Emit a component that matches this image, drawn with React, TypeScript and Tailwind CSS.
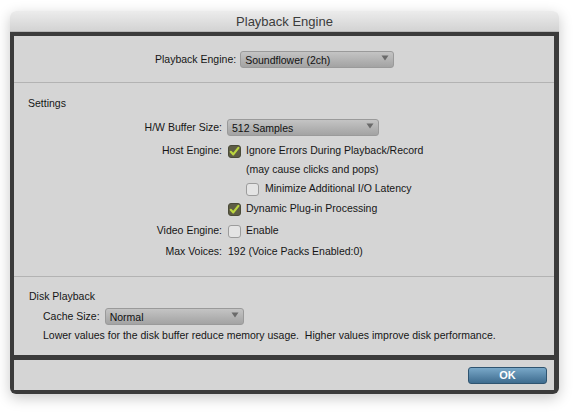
import React from "react";

const font = { fontFamily: '"Liberation Sans", Arial, sans-serif' };

function Dropdown({ value, w }: { value: string; w: string }) {
  return (
    <div
      className={`relative h-[17px] ${w} rounded-[3px] border border-[#9a9a9a] bg-gradient-to-b from-[#c4c4c4] to-[#a3a3a3] flex items-center pl-[4px] text-[10.5px] text-[#111]`}
    >
      <span className="leading-none mt-[1px]">{value}</span>
      <svg
        className="absolute right-[4px] top-[3px]"
        width="8"
        height="6"
        viewBox="0 0 8 6"
      >
        <path d="M0.5 0.5 H7.5 L4 5.5 Z" fill="#6a6a6a" />
      </svg>
    </div>
  );
}

function Check({ checked }: { checked: boolean }) {
  if (checked) {
    return (
      <div className="w-[13px] h-[13px] rounded-[3px] bg-[#5e5d45] border border-[#4a4a38] flex items-center justify-center shrink-0">
        <svg width="11" height="11" viewBox="0 0 11 11">
          <path
            d="M1.8 5.8 L4.3 8.4 L9.4 1.8"
            stroke="#bcd63f"
            strokeWidth="2.2"
            fill="none"
            strokeLinecap="round"
            strokeLinejoin="round"
          />
        </svg>
      </div>
    );
  }
  return (
    <div className="w-[13px] h-[13px] rounded-[3px] bg-[#e4e4e4] border border-[#9c9c9c] shrink-0" />
  );
}

function Row({
  label,
  mt,
  children,
}: {
  label?: string;
  mt: string;
  children: React.ReactNode;
}) {
  return (
    <div className={`flex items-center h-[16px] ${mt}`}>
      <div className="w-[208px] text-right shrink-0">{label}</div>
      <div className="ml-[6px] flex items-center">{children}</div>
    </div>
  );
}

export default function App() {
  return (
    <div
      className="w-[579px] h-[418px] bg-white pt-[11px] pl-[10px]"
      style={font}
    >
      <div className="w-[549px] rounded-[6px] shadow-[0_4px_14px_rgba(0,0,0,0.22)]">
        {/* title bar */}
        <div className="h-[21px] pt-[1px] rounded-t-[6px] bg-gradient-to-b from-[#ececec] to-[#d3d3d3] border-b border-[#b8b8b8] flex items-center justify-center text-[13px] text-[#3c3c3c]">
          Playback Engine
        </div>
        {/* dark frame */}
        <div className="bg-[#3b3b3b] pt-[4px] pl-[4px] pr-[5px] pb-[4px] rounded-b-[6px] flex flex-col gap-[5px]">
          {/* main panel */}
          <div className="bg-[#d5d5d5] h-[319px] flex flex-col text-[10.5px] text-[#161616]">
            {/* top section */}
            <div className="h-[47px] border-b border-[#b3b3b3] flex items-center pl-[141px] pt-[1px]">
              <span className="mr-[4px] mt-[1px]">Playback Engine:</span>
              <Dropdown value="Soundflower (2ch)" w="w-[154px]" />
            </div>
            {/* settings */}
            <div className="h-[194px] border-b border-[#b3b3b3] flex flex-col">
              <div className="h-[16px] mt-[13px] pl-[14px] flex items-center">
                Settings
              </div>
              <div className="flex items-center h-[17px] mt-[7px]">
                <div className="w-[208px] text-right shrink-0 mt-[1px]">
                  H/W Buffer Size:
                </div>
                <div className="ml-[5px]">
                  <Dropdown value="512 Samples" w="w-[152px]" />
                </div>
              </div>
              <Row label="Host Engine:" mt="mt-[7px]">
                <Check checked />
                <span className="ml-[5px]">
                  Ignore Errors During Playback/Record
                </span>
              </Row>
              <Row mt="mt-[3px]">
                <span className="ml-[18px]">(may cause clicks and pops)</span>
              </Row>
              <Row mt="mt-[3px]">
                <div className="ml-[18px] flex items-center">
                  <Check checked={false} />
                  <span className="ml-[6px]">
                    Minimize Additional I/O Latency
                  </span>
                </div>
              </Row>
              <Row mt="mt-[4px]">
                <Check checked />
                <span className="ml-[5px]">Dynamic Plug-in Processing</span>
              </Row>
              <Row label="Video Engine:" mt="mt-[6px]">
                <Check checked={false} />
                <span className="ml-[5px]">Enable</span>
              </Row>
              <Row label="Max Voices:" mt="mt-[5px]">
                <span>192 (Voice Packs Enabled:0)</span>
              </Row>
            </div>
            {/* disk playback */}
            <div className="flex flex-col pl-[15px]">
              <div className="h-[16px] mt-[12px] flex items-center">
                Disk Playback
              </div>
              <div className="flex items-center h-[17px] mt-[3px] pl-[14px]">
                <span className="mr-[5px] mt-[1px]">Cache Size:</span>
                <Dropdown value="Normal" w="w-[139px]" />
              </div>
              <div className="h-[16px] mt-[3px] pl-[14px] flex items-center whitespace-pre">
                {"Lower values for the disk buffer reduce memory usage.  Higher values improve disk performance."}
              </div>
            </div>
          </div>
          {/* bottom bar */}
          <div className="bg-[#d5d5d5] h-[30px] flex items-center justify-end pr-[7px]">
            <button className="w-[79px] h-[17px] rounded-[3px] border border-[#2f5470] bg-gradient-to-b from-[#79a8c8] to-[#3e6c8f] text-white font-bold text-[11px] leading-none flex items-center justify-center">
              OK
            </button>
          </div>
        </div>
      </div>
    </div>
  );
}
